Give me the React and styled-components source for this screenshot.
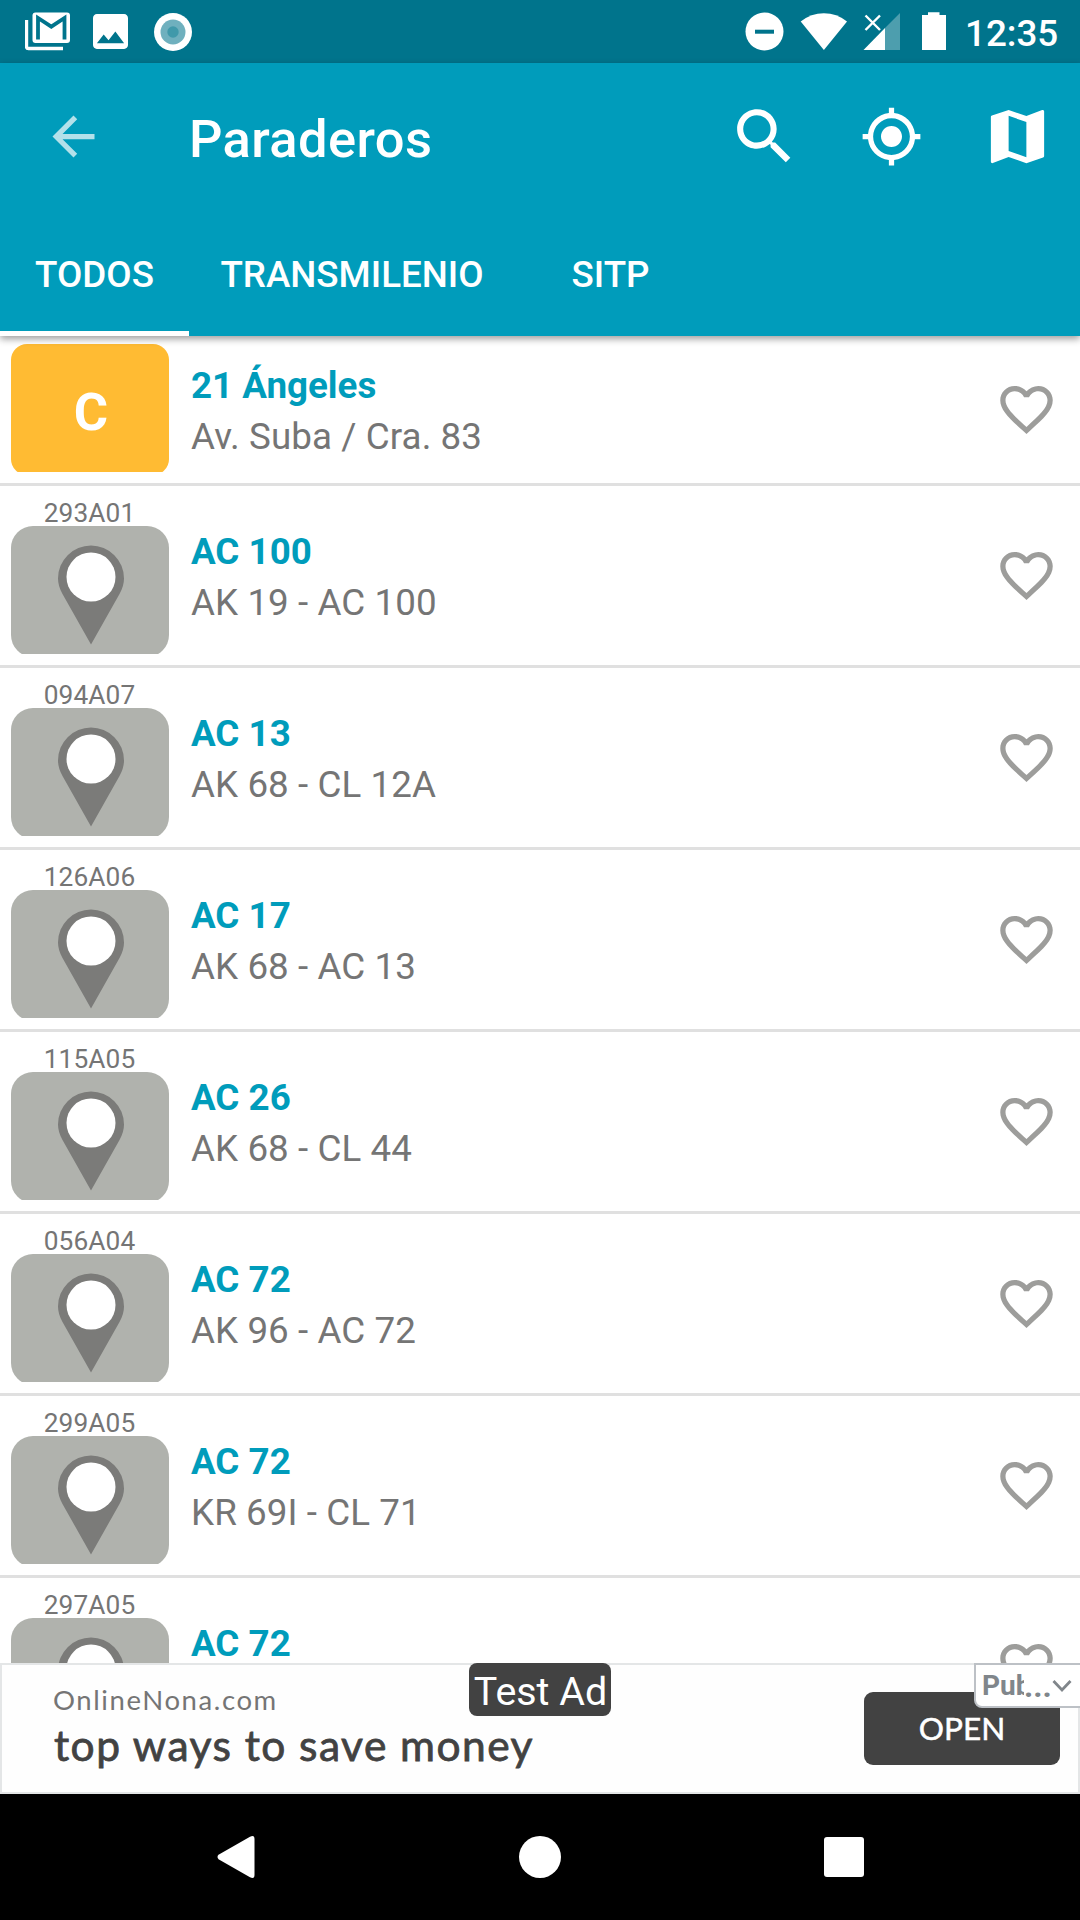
import React from "react";
import styled, { createGlobalStyle } from "styled-components";

const GlobalStyle = createGlobalStyle`
  * { box-sizing: border-box; }
  body { margin: 0; background: #fff; font-family: Roboto, "Noto Sans", sans-serif; }
  svg { display: block; flex: none; }
`;

const Screen = styled.div`
  width: 1080px;
  height: 1920px;
  display: flex;
  flex-direction: column;
  overflow: hidden;
  background: #fff;
`;

const StatusBar = styled.div`
  height: 63px;
  flex: none;
  display: flex;
  justify-content: space-between;
  background: #00748c;
  color: #fff;
`;

const StatusGroup = styled.div`
  display: flex;
  align-items: center;
`;

const NotificationIcons = styled(StatusGroup)`
  padding-left: 25px;
  gap: 22px;

  svg:last-child {
    margin-left: 4px;
  }
`;

const Clock = styled.span`
  width: 115px;
  padding-top: 3px;
  font-size: 36.75px;
  line-height: 43px;
  font-weight: 500;
`;

const Header = styled.header`
  position: relative;
  z-index: 1;
  flex: none;
  background: #009cbb;
  color: #fff;
  box-shadow: 0 3px 7px rgba(0, 0, 0, 0.38);
`;

const Toolbar = styled.div`
  height: 147px;
  display: flex;
  align-items: center;
  padding: 0 27px 0 42px;
`;

const Title = styled.h1`
  margin: 0 0 0 84px;
  padding-top: 4px;
  flex: 1;
  font-size: 52.5px;
  line-height: 62px;
  letter-spacing: 0.4px;
  font-weight: 500;
`;

const Actions = styled.div`
  display: flex;
  align-items: center;
  gap: 59px;
`;

const Tabs = styled.nav`
  height: 126px;
  display: flex;
`;

const Tab = styled.div`
  width: ${(p) => p.$width}px;
  padding-top: 43px;
  border-bottom: 5px solid ${(p) => (p.$active ? "#fff" : "transparent")};
  text-align: center;
  font-size: 36.75px;
  line-height: 43px;
  font-weight: 500;
`;

const List = styled.main`
  flex: 1;
  min-height: 0;
  overflow: hidden;
`;

const Row = styled.div`
  height: ${(p) => (p.$short ? 150 : 182)}px;
  display: flex;
  align-items: center;
  padding: 0 22px 0 11px;
  border-bottom: 3px solid #e0e0e0;
`;

const Marker = styled.div`
  width: 158px;
  align-self: stretch;
  padding-top: ${(p) => (p.$short ? 8 : 9)}px;
`;

const Code = styled.div`
  height: 31px;
  padding-right: 1px;
  text-align: center;
  font-size: 26.25px;
  line-height: 36px;
  letter-spacing: 0.1px;
  color: #757575;
`;

const BadgeClip = styled.div`
  height: 128px;
  overflow: hidden;
`;

const Badge = styled.div`
  height: 131px;
  display: flex;
  justify-content: center;
  padding-left: 2px;
  border-radius: ${(p) => (p.$yellow ? 16 : 22)}px;
  background: ${(p) => (p.$yellow ? "#ffbb33" : "#b0b2ad")};
  color: #fff;
  font-size: 52.5px;
  line-height: 137px;
  font-weight: 700;
`;

const Info = styled.div`
  flex: 1;
  padding: 2px 0 0 22px;
`;

const Name = styled.div`
  font-size: 36.75px;
  line-height: 43px;
  font-weight: 700;
  color: #009cbb;
`;

const Address = styled.div`
  margin-top: 8px;
  font-size: 36.75px;
  line-height: 43px;
  letter-spacing: 0.08px;
  color: #757575;
`;

const Favorite = styled.div`
  padding-bottom: 1px;
`;

const AdBanner = styled.aside`
  position: relative;
  flex: none;
  height: 131px;
  display: flex;
  justify-content: space-between;
  padding: 27px 18px 0 51px;
  border: 2px solid #e4e6e7;
  background: #fefefe;
  font-family: Lato, sans-serif;
`;

const AdSource = styled.div`
  margin-top: -9px;
  font-size: 27.5px;
  line-height: 34px;
  letter-spacing: 1.6px;
  color: #757575;
`;

const AdHeadline = styled.div`
  margin: 3px 0 0 1px;
  font-size: 42.5px;
  line-height: 50px;
  letter-spacing: 1.45px;
  color: #424242;
  -webkit-text-stroke: 0.8px #424242;
`;

const OpenButton = styled.button`
  width: 196px;
  height: 73px;
  border: 0;
  border-radius: 9px;
  background: #424242;
  color: #fff;
  font-family: Lato, sans-serif;
  font-size: 31.5px;
  -webkit-text-stroke: 0.5px #fff;
  padding: 0 0 2px;
`;

const TestBadge = styled.div`
  position: absolute;
  left: 467px;
  top: -2px;
  width: 142px;
  height: 53px;
  padding-left: 1px;
  border-radius: 8px;
  background: #424242;
  color: #fff;
  text-align: center;
  font-family: Roboto, sans-serif;
  font-size: 39.4px;
  line-height: 57px;
`;

const AdTag = styled.div`
  position: absolute;
  right: -4px;
  top: -2px;
  width: 108px;
  height: 45px;
  display: flex;
  align-items: center;
  padding: 0 0 0 6px;
  border: 2px solid #bdc1c6;
  border-bottom-left-radius: 8px;
  background: #fff;
  color: #80868b;
  font-family: Roboto, sans-serif;
  font-size: 28px;
  line-height: 34px;
  font-weight: 700;
`;

const AdTagLabel = styled.span`
  width: 42px;
  overflow: hidden;
  white-space: nowrap;
`;

const Dots = styled.span`
  width: 28px;
  font-size: 32px;
`;

const NavBar = styled.footer`
  flex: none;
  height: 126px;
  display: flex;
  align-items: center;
  justify-content: space-between;
  padding: 0 216px;
  background: #000;
`;

const GmailIcon = () => (
  <svg width="46" height="39" viewBox="0 0 46 39" fill="none">
    <path d="M1.500 8V34.500a2 2 0 0 0 2 2H38" stroke="#fff" strokeWidth="3.400" />
    <rect x="7.500" y="0.500" width="37.500" height="30.500" rx="3" fill="#fff" />
    <path d="M13 27.500V6L26.300 14.700L39.500 6V27.500" stroke="#00748c" strokeWidth="3.800" />
  </svg>
);

const ImageIcon = () => (
  <svg width="35" height="35" viewBox="3 3 18 18" fill="#fff">
    <path d="M21 19V5c0-1.100-.9-2-2-2H5c-1.100 0-2 .9-2 2v14c0 1.100.9 2 2 2h14c1.100 0 2-.9 2-2zM8.500 13.500l2.500 3.010L14.500 12l4.500 6H5l3.500-4.500z" />
  </svg>
);

const DiscIcon = () => (
  <svg width="38" height="38" viewBox="0 0 38 38">
    <circle cx="19" cy="19" r="19" fill="#fff" />
    <circle cx="19" cy="19" r="12.500" fill="#6fb0be" />
    <circle cx="19" cy="19" r="5.700" fill="#4099aa" />
  </svg>
);

const SystemIcons = () => (
  <svg width="221" height="63" viewBox="744 0 221 63" fill="#fff">
    <circle cx="764.500" cy="31.500" r="19" />
    <rect x="755" y="29.700" width="19" height="4" fill="#00748c" />
    <path d="M800.700 21.500Q811 13.200 823.900 13.200T847 21.500L823.900 50Z" />
    <path d="M900 13V50H885V28Z" opacity=".3" />
    <path d="M885 28V50H863.500Z" />
    <path d="M865.500 15.500L880 30M880 15.500L865.500 30" stroke="#fff" strokeWidth="2.400" />
    <path d="M928 12.300H939.500V15H946V50H922V15H928Z" />
  </svg>
);

const Glyph = ({ size = 63, color = "#fff", opacity = 1, d }) => (
  <svg width={size} height={size} viewBox="0 0 24 24" fill={color} opacity={opacity}>
    <path d={d} />
  </svg>
);

const ARROW = "M20 11H7.830l5.590-5.590L12 4l-8 8 8 8 1.410-1.410L7.830 13H20v-2z";
const SEARCH =
  "M15.500 14h-.79l-.28-.27C15.410 12.590 16 11.110 16 9.500 16 5.910 13.090 3 9.500 3S3 5.910 3 9.500 5.910 16 9.500 16c1.610 0 3.090-.59 4.230-1.570l.27.28v.79l5 4.990L20.490 19l-4.990-5zm-6 0C7.010 14 5 11.990 5 9.500S7.010 5 9.500 5 14 7.010 14 9.500 11.990 14 9.500 14z";
const GPS =
  "M12 8c-2.210 0-4 1.790-4 4s1.790 4 4 4 4-1.790 4-4-1.790-4-4-4zm8.940 3c-.46-4.170-3.770-7.480-7.940-7.940V1h-2v2.060C6.830 3.520 3.520 6.830 3.060 11H1v2h2.060c.46 4.170 3.770 7.480 7.940 7.940V23h2v-2.060c4.170-.46 7.480-3.770 7.940-7.940H23v-2h-2.060zM12 19c-3.870 0-7-3.130-7-7s3.130-7 7-7 7 3.130 7 7-3.130 7-7 7z";
const MAP =
  "M20.500 3l-.16.030L15 5.100 9 3 3.360 4.900c-.21.070-.36.250-.36.480V20.500c0 .28.220.5.500.5l.16-.030L9 18.900l6 2.100 5.640-1.900c.21-.070.360-.250.360-.480V3.500c0-.28-.220-.5-.5-.5zM15 19l-6-2.110V5l6 2.110V19z";
const HEART =
  "M16.500 3c-1.740 0-3.410.81-4.500 2.090C10.910 3.810 9.240 3 7.500 3 4.420 3 2 5.420 2 8.500c0 3.780 3.400 6.860 8.550 11.540L12 21.350l1.450-1.320C18.600 15.360 22 12.280 22 8.500 22 5.420 19.580 3 16.500 3zm-4.400 15.550l-.1.100-.1-.1C7.140 14.240 4 11.390 4 8.500 4 6.500 5.500 5 7.500 5c1.540 0 3.040.99 3.570 2.360h1.870C13.460 5.990 14.960 5 16.500 5c2 0 3.500 1.500 3.500 3.500 0 2.890-3.140 5.740-7.900 10.050z";

const PinIcon = () => (
  <svg width="68" height="128" viewBox="0 0 68 128">
    <path d="M34 118.500L5.500 68Q1 60 1 52.500A33 33 0 0 1 67 52.500Q67 60 62.500 68Z" fill="#7b7b79" />
    <circle cx="34" cy="51" r="24.500" fill="#fff" />
  </svg>
);

const stops = [
  { letter: "C", name: "21 Ángeles", address: "Av. Suba / Cra. 83" },
  { code: "293A01", name: "AC 100", address: "AK 19 - AC 100" },
  { code: "094A07", name: "AC 13", address: "AK 68 - CL 12A" },
  { code: "126A06", name: "AC 17", address: "AK 68 - AC 13" },
  { code: "115A05", name: "AC 26", address: "AK 68 - CL 44" },
  { code: "056A04", name: "AC 72", address: "AK 96 - AC 72" },
  { code: "299A05", name: "AC 72", address: "KR 69I - CL 71" },
  { code: "297A05", name: "AC 72", address: "" },
];

const StopRow = ({ stop }) => (
  <Row $short={!stop.code}>
    <Marker $short={!stop.code}>
      {stop.code && <Code>{stop.code}</Code>}
      <BadgeClip>
        <Badge $yellow={!stop.code}>{stop.letter || <PinIcon />}</Badge>
      </BadgeClip>
    </Marker>
    <Info>
      <Name>{stop.name}</Name>
      <Address>{stop.address || "\u00a0"}</Address>
    </Info>
    <Favorite>
      <Glyph d={HEART} color="#9d9d9b" />
    </Favorite>
  </Row>
);

export default function App() {
  return (
    <Screen>
      <GlobalStyle />
      <StatusBar>
        <NotificationIcons>
          <GmailIcon />
          <ImageIcon />
          <DiscIcon />
        </NotificationIcons>
        <StatusGroup>
          <SystemIcons />
          <Clock>12:35</Clock>
        </StatusGroup>
      </StatusBar>
      <Header>
        <Toolbar>
          <Glyph d={ARROW} opacity={0.7} />
          <Title>Paraderos</Title>
          <Actions>
            <Glyph d={SEARCH} size={73} />
            <Glyph d={GPS} />
            <Glyph d={MAP} size={71} />
          </Actions>
        </Toolbar>
        <Tabs>
          <Tab $width={189} $active>TODOS</Tab>
          <Tab $width={326}>TRANSMILENIO</Tab>
          <Tab $width={191}>SITP</Tab>
        </Tabs>
      </Header>
      <List>
        {stops.map((stop, i) => (
          <StopRow key={i} stop={stop} />
        ))}
      </List>
      <AdBanner>
        <div>
          <AdSource>OnlineNona.com</AdSource>
          <AdHeadline>top ways to save money</AdHeadline>
        </div>
        <OpenButton>OPEN</OpenButton>
        <TestBadge>Test Ad</TestBadge>
        <AdTag>
          <AdTagLabel>Pub</AdTagLabel>
          <Dots>...</Dots>
          <svg width="20" height="14" viewBox="0 0 20 14" fill="none" stroke="#80868b" strokeWidth="2.800">
            <path d="M1.500 2L10 11L18.500 2" />
          </svg>
        </AdTag>
      </AdBanner>
      <NavBar>
        <svg width="40" height="44" viewBox="0 0 40 44" fill="#fff">
          <path d="M2.500 19.800L34 1.700Q38.500-.5 38.500 4V40Q38.500 44.500 34 42.300L2.500 24.200Q.5 22 2.500 19.800Z" />
        </svg>
        <svg width="42" height="42" viewBox="0 0 42 42" fill="#fff">
          <circle cx="21" cy="21" r="21" />
        </svg>
        <svg width="40" height="40" viewBox="0 0 40 40" fill="#fff">
          <rect width="40" height="40" rx="3" />
        </svg>
      </NavBar>
    </Screen>
  );
}
